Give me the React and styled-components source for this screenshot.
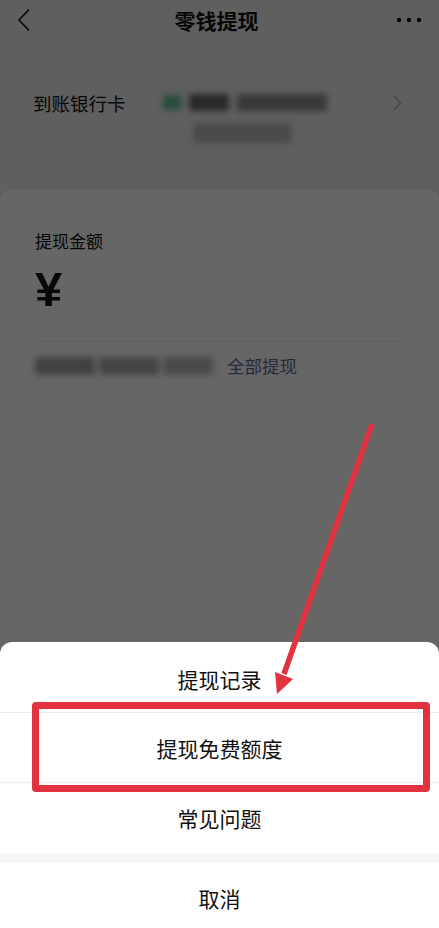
import React from "react";
import styled, { createGlobalStyle } from "styled-components";

const GlobalStyle = createGlobalStyle`
  html, body { margin: 0; padding: 0; }
  body {
    font-family: "Noto Sans CJK SC", "Noto Sans", sans-serif;
    color: #111;
    background: #ededed;
  }
  * { box-sizing: border-box; }
`;

const Page = styled.div`
  position: relative;
  width: 439px;
  height: 928px;
  overflow: hidden;
  background: #ededed;
  display: flex;
  flex-direction: column;
`;

const NavBar = styled.div`
  height: 44px;
  flex: none;
  display: flex;
  align-items: center;
  justify-content: space-between;
  padding: 0 16px 0 10px;
`;

const NavTitle = styled.div`
  font-size: 21px;
  font-weight: 700;
  line-height: 26px;
  margin-top: -4px;
`;

const NavIcon = styled.div`
  width: 28px;
  height: 28px;
  display: flex;
  align-items: center;
  justify-content: center;
  margin-top: -4px;
`;

const BankRow = styled.div`
  height: 145px;
  flex: none;
  display: flex;
  align-items: flex-start;
  padding: 46px 36px 0 33px;
`;

const RowLabel = styled.div`
  font-size: 18.5px;
  line-height: 26px;
  width: 130px;
  flex: none;
`;

const BlurInfo = styled.div`
  flex: 1;
  display: flex;
  flex-direction: column;
  gap: 12px;
  padding-top: 4px;
  filter: blur(3px);
`;

const BlurLine = styled.div`
  display: flex;
  gap: ${(p) => p.$gap || 6}px;
  align-items: center;
  padding-left: ${(p) => p.$indent || 0}px;
`;

const BlurBar = styled.div`
  width: ${(p) => p.$w}px;
  height: ${(p) => p.$h || 16}px;
  background: ${(p) => p.$c || "#8a8a8a"};
  border-radius: 2px;
`;

const Chevron = styled.div`
  width: 12px;
  height: 26px;
  display: flex;
  align-items: center;
  justify-content: center;
  margin-left: auto;
`;

const Card = styled.div`
  flex: 1;
  background: #ffffff;
  border-radius: 12px 12px 0 0;
  padding: 40px 38px 0 35px;
  display: flex;
  flex-direction: column;
`;

const CardLabel = styled.div`
  font-size: 17px;
  line-height: 24px;
`;

const Yen = styled.div`
  font-family: "Liberation Sans", "DejaVu Sans", sans-serif;
  font-size: 49px;
  font-weight: 700;
  line-height: 52px;
  margin-top: 10px;
`;

const Divider = styled.div`
  height: 1px;
  background: #ececec;
  margin-top: 26px;
`;

const BalanceRow = styled.div`
  display: flex;
  align-items: center;
  gap: 14px;
  margin-top: 12px;
`;

const BlurText = styled.div`
  display: flex;
  gap: 4px;
  filter: blur(3px);
`;

const LinkText = styled.div`
  font-size: 17.5px;
  line-height: 24px;
  color: #576b95;
`;

const Overlay = styled.div`
  position: absolute;
  inset: 0;
  background: rgba(0, 0, 0, 0.6);
`;

const Sheet = styled.div`
  position: absolute;
  left: 0;
  right: 0;
  bottom: 0;
  height: 286px;
  background: #ffffff;
  border-radius: 12px 12px 0 0;
  display: flex;
  flex-direction: column;
`;

const SheetItem = styled.div`
  height: ${(p) => p.$h || 70}px;
  flex: none;
  display: flex;
  align-items: center;
  justify-content: center;
  font-size: 21px;
  color: #111;
  padding-top: ${(p) => p.$pt || 0}px;
  border-bottom: ${(p) => (p.$line ? "1px solid #ececec" : "none")};
`;

const SheetGap = styled.div`
  height: 10px;
  flex: none;
  background: #f6f6f6;
`;

const Highlight = styled.div`
  position: absolute;
  left: 32px;
  top: 702px;
  width: 398px;
  height: 90px;
  border: 7px solid #e2323f;
  border-radius: 4px;
`;

const ArrowSvg = styled.svg`
  position: absolute;
  left: 0;
  top: 0;
  width: 439px;
  height: 928px;
  pointer-events: none;
`;

export default function App() {
  return (
    <>
      <GlobalStyle />
      <Page>
        <NavBar>
          <NavIcon>
            <svg width="14" height="24" viewBox="0 0 14 24">
              <path d="M12 1.5 L2 12 L12 22.5" fill="none" stroke="#111" strokeWidth="1.6" />
            </svg>
          </NavIcon>
          <NavTitle>零钱提现</NavTitle>
          <NavIcon>
            <svg width="26" height="6" viewBox="0 0 26 6">
              <circle cx="3" cy="3" r="2.2" fill="#111" />
              <circle cx="13" cy="3" r="2.2" fill="#111" />
              <circle cx="23" cy="3" r="2.2" fill="#111" />
            </svg>
          </NavIcon>
        </NavBar>

        <BankRow>
          <RowLabel>到账银行卡</RowLabel>
          <BlurInfo>
            <BlurLine $gap={8}>
              <BlurBar $w={18} $h={15} $c="#5fbf95" />
              <BlurBar $w={40} $h={17} $c="#666" />
              <BlurBar $w={90} $h={17} $c="#8c8c8c" />
            </BlurLine>
            <BlurLine $indent={30}>
              <BlurBar $w={98} $h={20} $c="#b8b8b8" />
            </BlurLine>
          </BlurInfo>
          <Chevron>
            <svg width="10" height="18" viewBox="0 0 10 18">
              <path d="M1.5 1.5 L8.5 9 L1.5 16.5" fill="none" stroke="#b2b2b2" strokeWidth="1.6" />
            </svg>
          </Chevron>
        </BankRow>

        <Card>
          <CardLabel>提现金额</CardLabel>
          <Yen>¥</Yen>
          <Divider />
          <BalanceRow>
            <BlurText>
              <BlurBar $w={60} $h={18} $c="#a3a3a3" />
              <BlurBar $w={60} $h={18} $c="#adadad" />
              <BlurBar $w={50} $h={18} $c="#b8b8b8" />
            </BlurText>
            <LinkText>全部提现</LinkText>
          </BalanceRow>
        </Card>

        <Overlay />

        <Sheet>
          <SheetItem $h={71} $line $pt={4}>提现记录</SheetItem>
          <SheetItem $h={70} $line>提现免费额度</SheetItem>
          <SheetItem $h={70}>常见问题</SheetItem>
          <SheetGap />
          <SheetItem $h={65} $pt={4}>取消</SheetItem>
        </Sheet>

        <Highlight />

        <ArrowSvg viewBox="0 0 439 928">
          <line x1="372" y1="424" x2="284" y2="674" stroke="#e2323f" strokeWidth="5.5" strokeLinecap="butt" />
          <polygon points="277,694 293,679 275,672" fill="#e2323f" />
        </ArrowSvg>
      </Page>
    </>
  );
}
